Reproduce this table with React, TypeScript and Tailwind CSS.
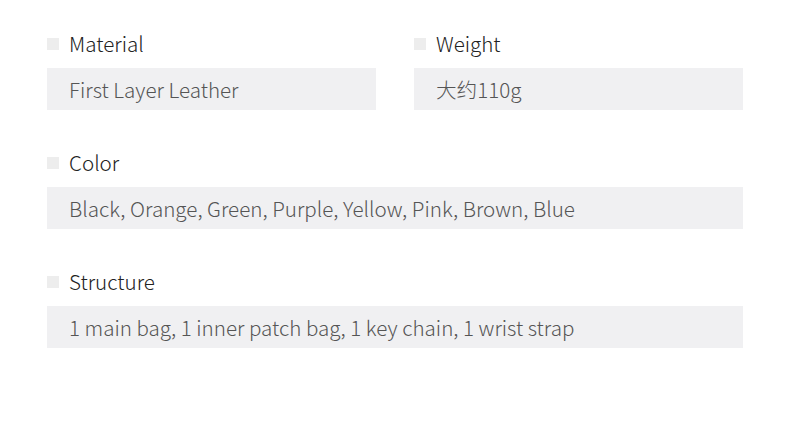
import React from "react";

const FONT = { fontFamily: '"Noto Sans CJK SC", "Noto Sans", sans-serif' };

function Field({ label, value }: { label: string; value: string }) {
  return (
    <div className="flex flex-col">
      <div className="flex h-[25px] items-center">
        <span className="h-[12px] w-[12px] bg-[#ededed]" />
        <span className="ml-[10px] text-[20.6px] font-light leading-none text-[#222]">{label}</span>
      </div>
      <div className="mt-[12px] flex h-[42px] items-center bg-[#f0f0f2] pl-[22px] text-[20.6px] font-light leading-none text-[#555]">
        {value}
      </div>
    </div>
  );
}

export default function App() {
  return (
    <div className="h-[438px] w-[790px] bg-white" style={FONT}>
      <div className="flex w-[743px] flex-col gap-[40px] pl-[47px] pt-[31px]">
        <div className="grid grid-cols-2 gap-[38px]">
          <Field label="Material" value="First Layer Leather" />
          <Field label="Weight" value="大约110g" />
        </div>
        <Field label="Color" value="Black, Orange, Green, Purple, Yellow, Pink, Brown, Blue" />
        <Field label="Structure" value="1 main bag, 1 inner patch bag, 1 key chain, 1 wrist strap" />
      </div>
    </div>
  );
}
